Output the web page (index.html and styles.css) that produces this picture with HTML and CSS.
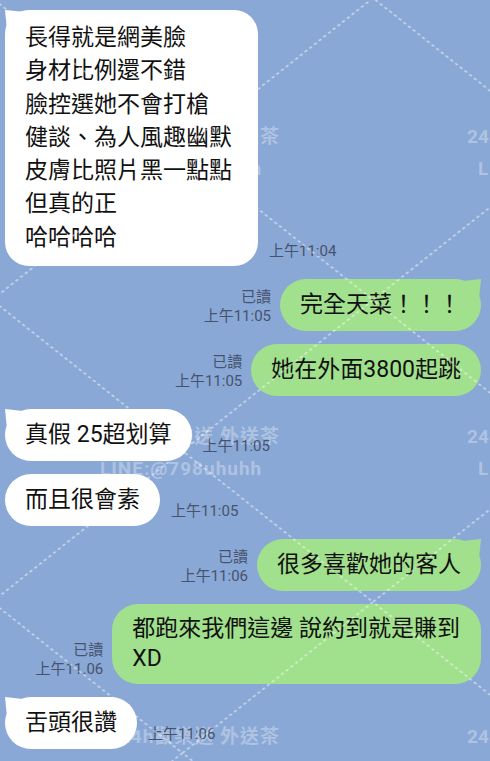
FILE: index.html
```html
<!DOCTYPE html>
<html lang="zh-Hant">
<head>
    <meta charset="UTF-8">
    <meta name="viewport" content="width=device-width, initial-scale=1.0">
    <title>聊天</title>
    <link rel="stylesheet" href="styles.css">
</head>
<body>
    <!-- 浮水印文字 (在對話框後面) -->
    <svg class="wm wm-back" width="490" height="761" viewBox="0 0 490 761">
        <g class="wm-text">
            <text x="280" y="143" text-anchor="end">24h歡樂送 外送茶</text>
            <text x="100" y="175">LINE:@798uhuhh</text>
            <text class="edge" x="467" y="143">24</text>
            <text class="edge" x="478" y="175">L</text>

            <text x="280" y="443" text-anchor="end">24h歡樂送 外送茶</text>
            <text x="100" y="475">LINE:@798uhuhh</text>
            <text class="edge" x="467" y="443">24</text>
            <text class="edge" x="478" y="475">L</text>

            <text x="280" y="743" text-anchor="end">24h歡樂送 外送茶</text>
            <text class="edge" x="467" y="743">24</text>
        </g>
    </svg>

    <div class="chat">
        <div class="row row-in">
            <div class="bubble bubble-in tail bubble-long">長得就是網美臉<br>身材比例還不錯<br>臉控選她不會打槍<br>健談、為人風趣幽默<br>皮膚比照片黑一點點<br>但真的正<br>哈哈哈哈</div>
            <div class="meta"><span>上午11:04</span></div>
        </div>

        <div class="row row-out">
            <div class="meta"><span>已讀</span><span>上午11:05</span></div>
            <div class="bubble bubble-out tail">完全天菜！！！</div>
        </div>

        <div class="row row-out">
            <div class="meta"><span>已讀</span><span>上午11:05</span></div>
            <div class="bubble bubble-out">她在外面3800起跳</div>
        </div>

        <div class="row row-in">
            <div class="bubble bubble-in tail">真假 25超划算</div>
            <div class="meta"><span>上午11:05</span></div>
        </div>

        <div class="row row-in">
            <div class="bubble bubble-in">而且很會素</div>
            <div class="meta"><span>上午11:05</span></div>
        </div>

        <div class="row row-out">
            <div class="meta"><span>已讀</span><span>上午11:06</span></div>
            <div class="bubble bubble-out tail">很多喜歡她的客人</div>
        </div>

        <div class="row row-out">
            <div class="meta"><span>已讀</span><span>上午11.06</span></div>
            <div class="bubble bubble-out bubble-two">都跑來我們這邊 說約到就是賺到<br>XD</div>
        </div>

        <div class="row row-in">
            <div class="bubble bubble-in tail">舌頭很讚</div>
            <div class="meta"><span>上午11:06</span></div>
        </div>
    </div>

    <!-- 虛線格子 (蓋在上面) -->
    <svg class="wm wm-front" width="490" height="761" viewBox="0 0 490 761">
        <defs>
            <pattern id="grid" width="381" height="302" patternUnits="userSpaceOnUse" patternTransform="translate(182.5 -2)">
                <path d="M0 151 L190.5 0 L381 151 L190.5 302 Z" fill="none" stroke="#fff" stroke-opacity="0.55" stroke-width="1.6" stroke-dasharray="3 3"/>
            </pattern>
        </defs>
        <rect width="490" height="761" fill="url(#grid)"/>
    </svg>
</body>
</html>
```

FILE: styles.css
```css
body {
    margin: 0;
    height: 761px;
    overflow: hidden;
    position: relative;
    background-color: #8aa8d5;
    font-family: Roboto, "Noto Sans CJK TC", sans-serif;
}

.chat {
    position: relative;
    z-index: 1;
    display: flex;
    flex-direction: column;
    gap: 13px;
    padding-top: 10px;
}

.row {
    display: flex;
    align-items: flex-end;
}
.row-in {
    padding-left: 5px;
    gap: 11px;
}
.row-out {
    justify-content: flex-end;
    padding-right: 9px;
    gap: 9px;
}

.bubble {
    position: relative;
    font-size: 23px;
    line-height: 32px;
    color: #111;
    padding: 10px 20px;
    border-radius: 26px;
    white-space: nowrap;
}
.bubble-in {
    background-color: #fff;
}
.bubble-out {
    background-color: #a1e08c;
}
.bubble-long {
    line-height: 33.3px;
    padding: 11px 26px 12px 20px;
    border-radius: 24px;
}
.bubble-two {
    line-height: 30px;
    padding: 10px 21px 10px 20px;
}

/* 對話框的小尖角 */
.tail::before {
    content: "";
    position: absolute;
    top: 0;
    width: 18px;
    height: 18px;
    background-color: inherit;
}
.bubble-in.tail::before {
    left: 0;
    clip-path: polygon(0 0, 100% 10%, 10% 100%);
}
.bubble-out.tail::before {
    right: 0;
    clip-path: polygon(100% 0, 0 10%, 90% 100%);
}

.meta {
    display: flex;
    flex-direction: column;
    align-items: flex-end;
    font-size: 15px;
    line-height: 19px;
    color: #46536e;
    padding-bottom: 5px;
    white-space: nowrap;
}

.wm {
    position: absolute;
    top: 0;
    left: 0;
    pointer-events: none;
}
.wm-back {
    z-index: 0;
}
.wm-front {
    z-index: 2;
}
.wm-text text {
    font-family: Roboto, "Noto Sans CJK TC", sans-serif;
    font-size: 19px;
    font-weight: bold;
    letter-spacing: 1px;
    fill: #fff;
    fill-opacity: 0.32;
}
.wm-text .edge {
    letter-spacing: 0;
}
```
